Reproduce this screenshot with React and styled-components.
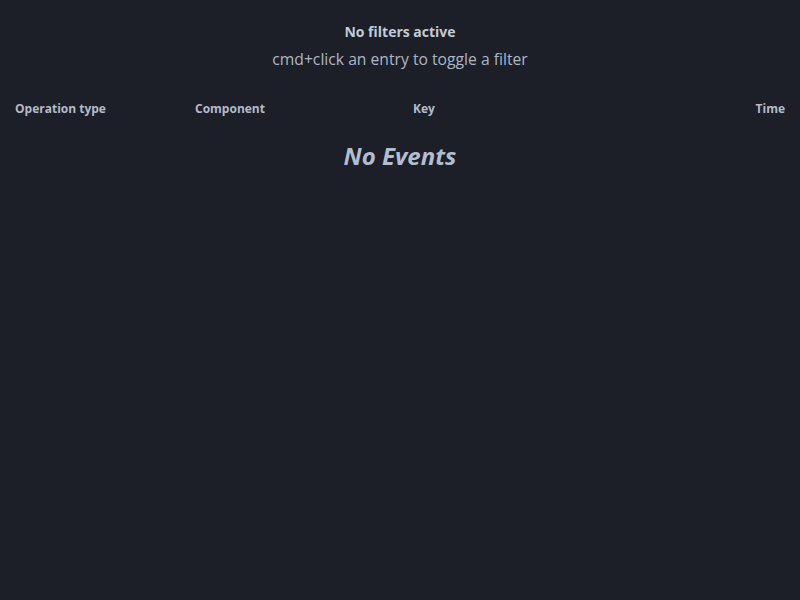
import React from "react";
import styled, { createGlobalStyle } from "styled-components";

const GlobalStyle = createGlobalStyle`
	html, body {
		margin: 0;
		padding: 0;
		background: #1c1f27;
	}
	body {
		font-family: "Open Sans", "Noto Sans", sans-serif;
		color: #b9c1d1;
	}
`;

const Page = styled.div`
	width: 800px;
	height: 600px;
	background: #1c1f27;
	display: flex;
	flex-direction: column;
`;

const FilterInfo = styled.div`
	display: flex;
	flex-direction: column;
	align-items: center;
	padding-top: 22px;
`;

const FilterTitle = styled.div`
	font-size: 14px;
	font-weight: 700;
	line-height: 20px;
	color: #c3cad8;
`;

const FilterHint = styled.div`
	font-size: 15.7px;
	line-height: 22px;
	margin-top: 6px;
	color: #aeb6c6;
`;

const HeaderRow = styled.div`
	display: grid;
	grid-template-columns: 180px 218px 1fr auto;
	padding: 0 15px;
	margin-top: 30px;
	font-size: 12px;
	font-weight: 700;
	line-height: 18px;
	color: #b3bbcb;
`;

const HeaderCell = styled.div`
	text-align: ${(p) => (p.right ? "right" : "left")};
`;

const Empty = styled.div`
	text-align: center;
	margin-top: 23px;
	font-size: 24px;
	font-weight: 700;
	font-style: italic;
	line-height: 30px;
	color: #b4bdcf;
`;

const App = () => {
	return (
		<Page>
			<GlobalStyle />
			<FilterInfo>
				<FilterTitle>No filters active</FilterTitle>
				<FilterHint>cmd+click an entry to toggle a filter</FilterHint>
			</FilterInfo>
			<HeaderRow>
				<HeaderCell>Operation type</HeaderCell>
				<HeaderCell>Component</HeaderCell>
				<HeaderCell>Key</HeaderCell>
				<HeaderCell right>Time</HeaderCell>
			</HeaderRow>
			<Empty>No Events</Empty>
		</Page>
	);
};

export default App;
